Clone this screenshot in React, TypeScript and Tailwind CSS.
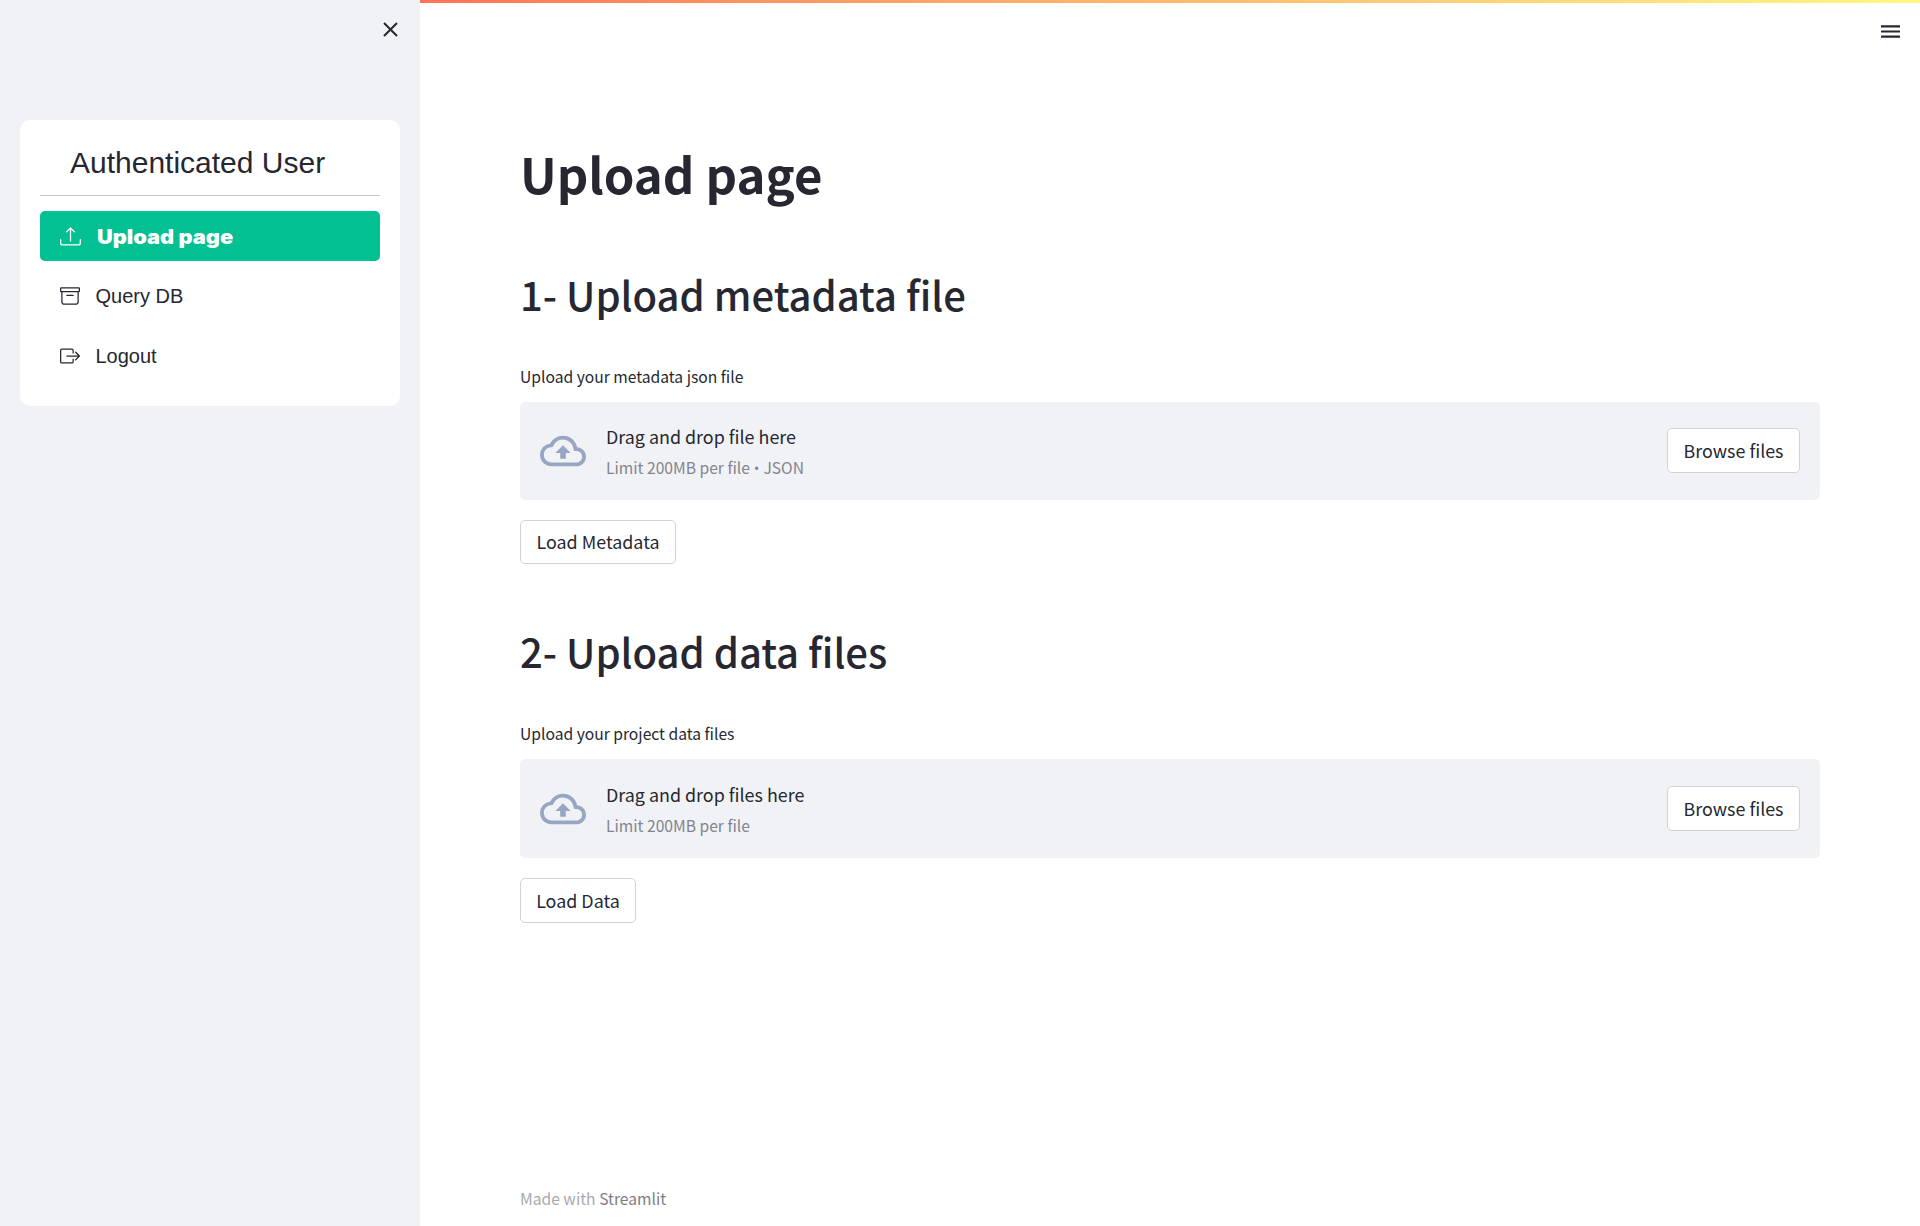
import React from "react";
import { BsUpload, BsArchive, BsBoxArrowRight } from "react-icons/bs";

function CloudUpload() {
  return (
    <svg viewBox="0 0 24 24" className="size-[46px] shrink-0 fill-[#97a6c3]">
      <path d="M19.35 10.04A7.49 7.49 0 0 0 12 4C9.11 4 6.6 5.64 5.35 8.04A5.994 5.994 0 0 0 0 14c0 3.31 2.69 6 6 6h13c2.76 0 5-2.24 5-5 0-2.64-2.05-4.78-4.65-4.96zM19 18H6c-2.21 0-4-1.79-4-4 0-2.05 1.53-3.76 3.56-3.97l1.07-.11.5-.95A5.469 5.469 0 0 1 12 6c2.62 0 4.88 1.86 5.39 4.43l.3 1.5 1.53.11A2.98 2.98 0 0 1 22 15c0 1.65-1.35 3-3 3zM8 13h2.55v3h2.9v-3H16l-4-4z" />
    </svg>
  );
}

function Button({ children, className }: { children: React.ReactNode; className: string }) {
  return (
    <button
      className={`flex items-center justify-center rounded-[5px] border border-[#d2d3d5] bg-white pb-[2px] text-[17.9px] leading-[26px] whitespace-nowrap ${className}`}
    >
      {children}
    </button>
  );
}

function Dropzone({ title, hint, types }: { title: string; hint: string; types?: string }) {
  return (
    <div className="flex h-[99px] items-center rounded-[5px] bg-[#f0f2f6] px-5">
      <CloudUpload />
      <div className="ml-5 flex flex-1 flex-col pt-[2px]">
        <span className="h-[31px] text-[17.9px] leading-[30px]">{title}</span>
        <span className="h-[30px] text-[15.65px] leading-[31px] text-[#83858e]">
          {hint}
          {types && (
            <>
              <span className="font-['Open_Sans',sans-serif] text-[15px] leading-none"> • </span>
              {types}
            </>
          )}
        </span>
      </div>
      <Button className="h-[45px] w-[133px]">Browse files</Button>
    </div>
  );
}

export default function App() {
  return (
    <div className="flex h-[1226px] w-[1920px] overflow-hidden bg-white font-['Noto_Sans_CJK_SC',sans-serif] text-[#262730]">
      <aside className="flex w-[420px] shrink-0 flex-col bg-[#f0f2f6] px-5 font-['Liberation_Sans',sans-serif]">
        <div className="flex h-[120px] justify-end pt-[22px]">
          <svg viewBox="0 0 15 15" className="mr-[2px] size-[15px] stroke-[#262730] stroke-2">
            <path d="M1 1L14 14M14 1L1 14" />
          </svg>
        </div>
        <div className="flex h-[286px] flex-col rounded-[10px] bg-white px-5">
          <div className="h-[76px] border-b border-[#c6c8ca] pt-[20px] pl-[30px] text-[30px] leading-[45px]">
            Authenticated User
          </div>
          <nav className="flex flex-col gap-[10px] pt-[15px] text-[20px]">
            <a className="flex h-[50px] items-center rounded-[5px] bg-[#02c092] pl-5 font-['Inter',sans-serif] font-black text-white">
              <BsUpload className="mr-4 size-[21px]" />
              <span className="origin-left scale-x-[1.09] pt-px">Upload page</span>
            </a>
            <a className="flex h-[50px] items-center pl-5">
              <BsArchive className="mr-[15.5px] size-[20px]" />
              Query DB
            </a>
            <a className="flex h-[50px] items-center pl-5">
              <BsBoxArrowRight className="mr-[15.5px] size-[20px]" />
              Logout
            </a>
          </nav>
        </div>
      </aside>
      <div className="flex flex-1 flex-col">
        <div className="h-[3px] bg-linear-to-r from-[#ff7459] to-[#fff880]" />
        <header className="flex h-[57px] justify-end pt-[22px] pr-5">
          <svg viewBox="0 0 19 13" className="h-[13px] w-[19px] stroke-[#262730] stroke-[2.1]">
            <path d="M0 1.4H19M0 6.5H19M0 11.6H19" />
          </svg>
        </header>
        <main className="flex w-[1400px] flex-1 flex-col pl-[100px]">
          <h1 className="mt-[77px] h-[70px] text-[49.1px] leading-[71px] font-bold">Upload page</h1>
          <section className="mt-[57px] flex h-[300px] flex-col">
            <h2 className="h-[60px] text-[40px] leading-[60px] font-medium">1- Upload metadata file</h2>
            <label className="mt-[38px] h-[40px] text-[15.65px] leading-[29px]">Upload your metadata json file</label>
            <Dropzone title="Drag and drop file here" hint="Limit 200MB per file" types="JSON" />
            <Button className="mt-5 h-[44px] w-[156px] shrink-0">Load Metadata</Button>
          </section>
          <section className="mt-[57px] flex flex-col">
            <h2 className="h-[60px] text-[40px] leading-[60px] font-medium">2- Upload data files</h2>
            <label className="mt-[38px] h-[40px] text-[15.65px] leading-[29px]">Upload your project data files</label>
            <Dropzone title="Drag and drop files here" hint="Limit 200MB per file" />
            <Button className="mt-5 h-[45px] w-[116px]">Load Data</Button>
          </section>
          <footer className="mt-auto mb-[13px] text-[15.65px] leading-[29px] text-[#a8a9ae]">
            Made with <span className="text-[#7d7e86]">Streamlit</span>
          </footer>
        </main>
      </div>
    </div>
  );
}
